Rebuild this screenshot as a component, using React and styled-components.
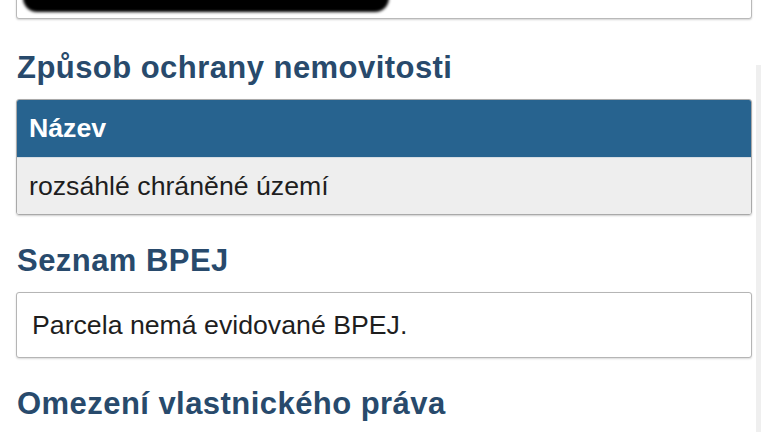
import styled, { createGlobalStyle } from 'styled-components';

const GlobalStyle = createGlobalStyle`
  html, body {
    margin: 0;
    padding: 0;
    background: #ffffff;
    overflow: hidden;
  }
  body {
    font-family: "Liberation Sans", Arial, Helvetica, sans-serif;
  }
`;

const Page = styled.div`
  position: relative;
  width: 768px;
  height: 432px;
  overflow: hidden;
  background: #fff;
`;

const Content = styled.div`
  padding: 0 16px;
  display: flex;
  flex-direction: column;
`;

const TopCard = styled.div`
  height: 47px;
  margin-top: -30px;
  border: 1px solid #b9b9b9;
  border-radius: 3px;
  box-shadow: 0 1px 2px rgba(0, 0, 0, 0.18);
  background: #fff;
  padding: 0 4px;
  display: flex;
`;

const Redacted = styled.div`
  width: 366px;
  height: 41px;
  margin-left: 2px;
  background: #000;
  border-radius: 0 0 14px 14px;
  filter: blur(1.5px);
`;

const Section = styled.section`
  margin-top: ${p => p.$first ? '30px' : '27px'};
`;

const Heading = styled.h2`
  margin: 0 0 13px 1px;
  font-size: 31px;
  line-height: 37px;
  font-weight: bold;
  letter-spacing: 0.45px;
  color: #284a6c;
`;

const Table = styled.div`
  border: 1px solid #a9a9a9;
  border-radius: 3px;
  box-shadow: 0 1px 2px rgba(0, 0, 0, 0.2);
  overflow: hidden;
`;

const Row = styled.div`
  height: ${p => p.$head ? '57px' : '56px'};
  display: flex;
  align-items: center;
  padding: 0 12px;
  font-size: 26.7px;
  background: ${p => p.$head ? '#27638f' : '#eeeeee'};
  color: ${p => p.$head ? '#ffffff' : '#1e1e1e'};
  font-weight: ${p => p.$head ? 'bold' : 'normal'};
  border-top: ${p => p.$head ? 'none' : '1px solid #d6dde3'};
`;

const InfoBox = styled.div`
  height: 64px;
  display: flex;
  align-items: center;
  padding: 0 15px;
  border: 1px solid #b5b5b5;
  border-radius: 3px;
  box-shadow: 0 1px 2px rgba(0, 0, 0, 0.15);
  font-size: 26.7px;
  color: #1e1e1e;
  background: #fff;
`;

const ScrollTrack = styled.div`
  position: absolute;
  left: 756px;
  top: 65px;
  bottom: 0;
  width: 5px;
  background: #efefef;
`;

export default function App() {
  return (
    <Page>
      <GlobalStyle />
      <Content>
        <TopCard>
          <Redacted />
        </TopCard>

        <Section $first>
          <Heading>Způsob ochrany nemovitosti</Heading>
          <Table>
            <Row $head>Název</Row>
            <Row>rozsáhlé chráněné území</Row>
          </Table>
        </Section>

        <Section>
          <Heading>Seznam BPEJ</Heading>
          <InfoBox>Parcela nemá evidované BPEJ.</InfoBox>
        </Section>

        <Section>
          <Heading>Omezení vlastnického práva</Heading>
        </Section>
      </Content>
      <ScrollTrack />
    </Page>
  );
}
